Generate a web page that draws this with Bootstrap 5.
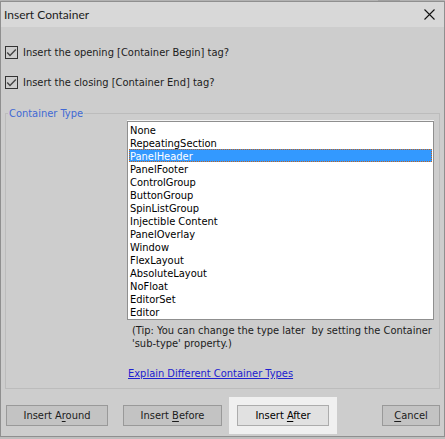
<!DOCTYPE html>
<html lang="en">
<head>
<meta charset="utf-8">
<meta name="viewport" content="width=device-width, initial-scale=1">
<title>Insert Container</title>
<link href="https://cdn.jsdelivr.net/npm/bootstrap@5.3.0/dist/css/bootstrap.min.css" rel="stylesheet">
<style>
body{background:#bebebe;font-family:"DejaVu Sans Condensed","Noto Sans",sans-serif;font-size:11px;line-height:13px;color:#1c1c1c}
.backdrop-strip{height:1px;background:linear-gradient(to right,#bebebe 85%,#aaa 85%,#aaa 90%,#bebebe 90%)}
.dialog{background:#cdcdcd;border:1px solid #8f8f8f;box-shadow:0 1px 3px #777}
.titlebar{background:#d8d8d8;height:25px;padding:0 9px 0 3px}
.titlebar h1{font:12px/24px Lato,"Open Sans",sans-serif}
.close-btn{line-height:0;color:#111}
.checks{padding:15px 4px 5px}
.check-line{height:20px;margin-bottom:10px;gap:5px}
.form-check-input.tick{width:13px;height:13px;border:1px solid #333;border-radius:0;background-color:#cdcdcd;box-shadow:none}
.form-check-input.tick:checked{border-color:#333;background-color:#cdcdcd;background-size:13px 13px;background-image:url("data:image/svg+xml,%3Csvg xmlns='http://www.w3.org/2000/svg' viewBox='0 0 13 13'%3E%3Cpath d='M2.2 6.5l2.8 3L10.8 3.5' fill='none' stroke='%23444' stroke-width='1.4'/%3E%3C/svg%3E")}
.type-group{border:1px solid #bcbcbc;margin:0 4px;padding:0 5px 8px 121px;height:auto}
.type-group legend{float:none;width:auto;font-size:11px;line-height:13px;margin:0 0 1px -119px;padding:0 1px;color:#4169d4}
.type-list{height:199px;border:1px solid #8f8f8f;border-radius:0;padding:1px;background:#fff;color:#000;font:inherit;overflow:hidden;box-shadow:0 -1px #f4f4f4;outline:0}
.type-list option{box-sizing:border-box;height:13px;min-height:13px;line-height:11px;padding:0;border:1px solid transparent}
.type-list option:checked{background:#39f linear-gradient(#39f,#39f);color:#fff;-webkit-text-fill-color:#fff;border:1px dotted #c4641c}
.tip{margin:4px 0 0 5px}
.more-link{margin:17px 0 0 1px;color:#2020d0}
.more-link a{color:inherit}
.actions{padding:16px 4px 10px 5px;gap:15px}
.cmd{height:21px;padding:0;font:inherit;line-height:17px;color:#1c1c1c;background:#c3c3c3;border:1px solid #999;border-radius:0}
.cmd u{text-underline-offset:2px}
.cmd-around{width:102px}
.cmd-before{width:99px}
.cmd-after{width:92px;color:#000;background:#e1e1e1;border-color:#acacac;box-shadow:0 0 0 8px #f0f0f0}
.cmd-cancel{width:58px}
</style>
</head>
<body>
<div class="backdrop-strip"></div>
<main class="dialog">
  <header class="titlebar d-flex align-items-center justify-content-between">
    <h1 class="m-0">Insert Container</h1>
    <button type="button" class="close-btn border-0 bg-transparent p-0" aria-label="Close">
      <svg width="11" height="11" viewBox="0 0 11 11"><path d="M.5 .5l10 10M10.5 .5L.5 10.5" fill="none" stroke="currentColor" stroke-width="1.1"/></svg>
    </button>
  </header>
  <form>
    <div class="checks">
      <div class="check-line d-flex align-items-center">
        <input class="form-check-input tick m-0" type="checkbox" id="openTag" checked>
        <label for="openTag">Insert the opening [Container Begin] tag?</label>
      </div>
      <div class="check-line d-flex align-items-center">
        <input class="form-check-input tick m-0" type="checkbox" id="closeTag" checked>
        <label for="closeTag">Insert the closing [Container End] tag?</label>
      </div>
    </div>
    <fieldset class="type-group">
      <legend>Container Type</legend>
      <select class="type-list d-block w-100" size="15" aria-label="Container Type">
        <option>None</option>
        <option>RepeatingSection</option>
        <option selected>PanelHeader</option>
        <option>PanelFooter</option>
        <option>ControlGroup</option>
        <option>ButtonGroup</option>
        <option>SpinListGroup</option>
        <option>Injectible Content</option>
        <option>PanelOverlay</option>
        <option>Window</option>
        <option>FlexLayout</option>
        <option>AbsoluteLayout</option>
        <option>NoFloat</option>
        <option>EditorSet</option>
        <option>Editor</option>
      </select>
      <p class="tip mb-0">(Tip: You can change the type later&nbsp; by setting the Container<br>'sub-type' property.)</p>
      <p class="more-link mb-0"><a href="#">Explain Different Container Types</a></p>
    </fieldset>
    <div class="actions d-flex">
      <button type="button" class="btn cmd cmd-around">Insert A<u>r</u>ound</button>
      <button type="button" class="btn cmd cmd-before">Insert <u>B</u>efore</button>
      <button type="button" class="btn cmd cmd-after">Insert <u>A</u>fter</button>
      <button type="button" class="btn cmd cmd-cancel ms-auto"><u>C</u>ancel</button>
    </div>
  </form>
</main>
<script src="https://cdn.jsdelivr.net/npm/bootstrap@5.3.0/dist/js/bootstrap.bundle.min.js"></script>
</body>
</html>
